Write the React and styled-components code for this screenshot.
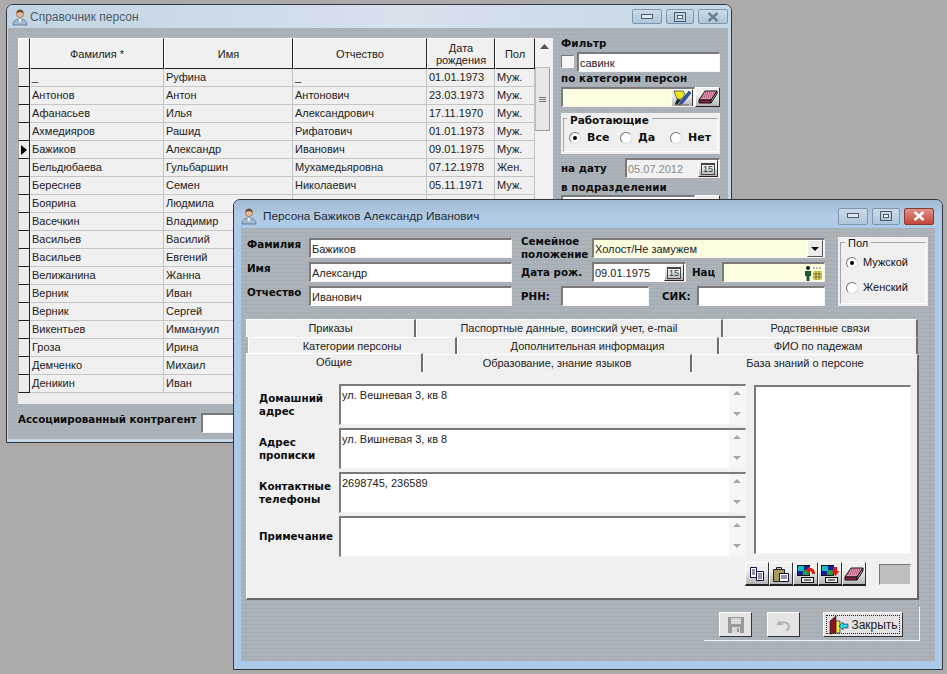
import React from 'react';
import styled, { createGlobalStyle, css } from 'styled-components';

const GlobalStyle = createGlobalStyle`
  html, body { margin: 0; padding: 0; background: #ababab; }
  body { font-family: "Liberation Sans", Arial, sans-serif; font-size: 11px; color: #111; }
  * { box-sizing: border-box; }
`;

const sunken = css`
  border-style: solid;
  border-width: 2px 1px 1px 2px;
  border-color: #7a7a7a #f4f4f4 #f4f4f4 #7a7a7a;
`;

const Desktop = styled.div`
  position: relative;
  width: 947px;
  height: 674px;
  overflow: hidden;
  background: #ababab;
`;

const Win = styled.div`
  position: absolute;
  left: ${p => p.$x}px;
  top: ${p => p.$y}px;
  width: ${p => p.$w}px;
  height: ${p => p.$h}px;
  display: flex;
  flex-direction: column;
  padding: ${p => p.$active ? '0 7px 8px' : '0 3px 3px 1px'};
  border: 1px solid #33373c;
  border-radius: 7px 7px 0 0;
  background: ${p => p.$active ? '#abc9e8' : '#c4d5e4'};
`;

const TitleBar = styled.div`
  flex: none;
  height: ${p => p.$active ? 28 : 23}px;
  margin: ${p => p.$active ? '0 -7px' : '0 -3px 0 -1px'};
  padding: ${p => p.$active ? '4px 8px 0 6px' : '0 3px 0 4px'};
  display: flex;
  align-items: center;
  gap: ${p => p.$active ? 5 : 1}px;
  border-radius: 6px 6px 0 0;
  font-size: ${p => p.$active ? 11.8 : 12}px;
  color: ${p => p.$active ? '#1e2a38' : '#4e5a66'};
  background: ${p => p.$active
    ? 'linear-gradient(180deg, #9fbad6 0%, #b4cbe3 60%, #abc9e8 100%)'
    : 'linear-gradient(90deg, #c2d4e4 0%, #d6e2ec 55%, #c6d7e6 100%)'};
`;

const TitleText = styled.span`
  flex: 1;
`;

const WinButtons = styled.div`
  display: flex;
  gap: 4px;
`;

const WinButton = styled.div`
  width: ${p => p.$wide ? 30 : 28}px;
  height: ${p => p.$active ? 17 : 15}px;
  display: flex;
  align-items: center;
  justify-content: center;
  border: 1px solid ${p => p.$close && p.$active ? '#8a3a30' : '#7f95ab'};
  border-radius: 2px;
  background: ${p => p.$close && p.$active
    ? 'linear-gradient(180deg, #e0908a, #c2483c)'
    : 'linear-gradient(180deg, #cbdbea, #aec5db)'};
`;

const Client = styled.div`
  flex: 1;
  min-height: 0;
  background-color: #aab2b8;
  background-image:
    repeating-linear-gradient(90deg, rgba(255,255,255,.05) 0 1px, transparent 1px 3px),
    repeating-linear-gradient(0deg, rgba(0,0,0,.035) 0 1px, transparent 1px 4px);
`;

const ListClient = styled(Client)`
  padding: 10px 0 0 10px;
`;

const ListTop = styled.div`
  display: flex;
  gap: 8px;
`;

const GridBox = styled.div`
  width: 535px;
  height: 366px;
  display: flex;
  background: #ececec;
  overflow: hidden;
`;

const Table = styled.div`
  flex: none;
  width: 517px;
  display: grid;
  grid-template-columns: 12px 134px 129px 134px 68px 40px;
  grid-template-rows: 31px;
  grid-auto-rows: 18px;
  align-content: start;
`;

const HeadCell = styled.div`
  display: flex;
  align-items: center;
  justify-content: center;
  text-align: center;
  font-size: 11px;
  line-height: 12px;
  color: #222;
  background: #f0f0f0;
  border-right: 1px solid #222;
  border-bottom: 1px solid #222;
  border-left: 1px solid #fff;
  border-top: 1px solid #fff;
`;

const Indicator = styled.div`
  display: flex;
  align-items: center;
  justify-content: center;
  background: #ececec;
  border-right: 1px solid #222;
  border-bottom: 1px solid #222;
  border-left: 1px solid #aaa;
`;

const Arrow = styled.div`
  width: 0;
  height: 0;
  border-left: 6px solid #000;
  border-top: 5px solid transparent;
  border-bottom: 5px solid transparent;
`;

const Cell = styled.div`
  padding: 1px 0 0 2px;
  font-size: 11px;
  line-height: 15px;
  color: #222;
  white-space: nowrap;
  overflow: hidden;
  background: #f0f0f0;
  border-right: 1px solid #c4c4c4;
  border-bottom: 1px solid #c4c4c4;
`;

const VScroll = styled.div`
  flex: none;
  width: 18px;
  display: flex;
  flex-direction: column;
  background: #f2f2f2;
`;

const ScrollBtn = styled.div`
  height: 18px;
  display: flex;
  align-items: center;
  justify-content: center;
`;

const Thumb = styled.div`
  width: 15px;
  height: 64px;
  margin: 11px 0 0 0;
  display: flex;
  flex-direction: column;
  align-items: center;
  justify-content: center;
  gap: 1px;
  background: #e6e6e6;
  border: 1px solid #bbb;
  border-right-color: #999;
  border-bottom-color: #999;
`;

const ThumbLine = styled.i`
  display: block;
  width: 7px;
  height: 1px;
  background: #777;
`;

const Side = styled.div`
  width: 159px;
`;

const Bold = styled.div`
  font-family: "DejaVu Sans", sans-serif;
  font-weight: 700;
  font-size: 10.3px;
  line-height: 13px;
  color: #0c0c0c;
  white-space: nowrap;
`;

const SideLabel = styled(Bold)`
  margin-top: ${p => p.$top || 0}px;
  letter-spacing: 0.1px;
`;

const Row = styled.div`
  display: flex;
  align-items: ${p => p.$align || 'center'};
  gap: ${p => p.$gap || 0}px;
  margin-top: ${p => p.$top || 0}px;
`;

const Check = styled.div`
  flex: none;
  width: 13px;
  height: 13px;
  margin-top: 3px;
  background: #f5f5f5;
  border: 1px solid;
  border-color: #7a7a7a #f4f4f4 #f4f4f4 #7a7a7a;
`;

const Input = styled.div`
  width: ${p => p.$w ? `${p.$w}px` : 'auto'};
  flex: ${p => p.$w ? 'none' : 1};
  height: 20px;
  padding: 0 1px;
  display: flex;
  align-items: center;
  font-size: 11px;
  color: ${p => p.$muted ? '#8a8a8a' : '#222'};
  white-space: nowrap;
  overflow: hidden;
  background: ${p => p.$yellow ? '#fdfde0' : p.$muted ? '#f1f1f1' : '#fff'};
  ${sunken}
`;

const InputText = styled.span`
  flex: 1;
`;

const IconButton = styled.div`
  flex: none;
  width: ${p => p.$w || 22}px;
  height: ${p => p.$h || 18}px;
  display: flex;
  align-items: center;
  justify-content: center;
  background: linear-gradient(180deg, #f0f0f0 35%, #b4b4b4);
  border-style: solid;
  border-width: 1px;
  border-color: #fff #333 #222 #fff;
`;

const Group = styled.div`
  position: relative;
  flex: none;
  width: ${p => p.$w}px;
  height: ${p => p.$h}px;
  margin-top: ${p => p.$top || 0}px;
  margin-left: ${p => p.$left || 0}px;
  padding-top: ${p => p.$pad || 0}px;
  background: #efefef;
  &::before {
    content: '';
    position: absolute;
    inset: 5px 2px 2px 2px;
    border: 1px solid #a4a4a4;
    border-right-color: #fff;
    border-bottom-color: #fff;
  }
`;

const GroupTitle = styled.div`
  position: relative;
  display: inline-block;
  margin-left: ${p => p.$plain ? 7 : 6}px;
  padding: 0 3px;
  background: #efefef;
  line-height: 12px;
  font-size: ${p => p.$plain ? '11px' : '10.5px'};
  font-weight: ${p => p.$plain ? 400 : 700};
  font-family: ${p => p.$plain ? '"Liberation Sans"' : '"DejaVu Sans"'}, sans-serif;
`;

const RadioRow = styled.div`
  position: relative;
  display: grid;
  grid-template-columns: 51px 50px auto;
  margin-top: 5px;
  padding-left: 8px;
`;

const RadioColumn = styled.div`
  position: relative;
  display: flex;
  flex-direction: column;
  gap: 12px;
  padding: 7px 0 0 8px;
`;

const RadioItem = styled.div`
  display: flex;
  align-items: center;
  gap: ${p => p.$plain ? 5 : 6}px;
  font-size: 11px;
  line-height: 13px;
  font-weight: ${p => p.$plain ? 400 : 700};
  font-family: ${p => p.$plain ? '"Liberation Sans"' : '"DejaVu Sans"'}, sans-serif;
`;

const RadioDot = styled.span`
  flex: none;
  width: 12px;
  height: 12px;
  display: flex;
  align-items: center;
  justify-content: center;
  border-radius: 50%;
  background: #fff;
  border: 1px solid;
  border-color: #777 #ddd #ddd #777;
  &::after {
    content: '';
    width: 4px;
    height: 4px;
    border-radius: 50%;
    background: ${p => p.$on ? '#000' : 'transparent'};
  }
`;

const CalText = styled.span`
  font-size: 9px;
  line-height: 9px;
  padding: 0 1px;
  color: #333;
  border: 1px solid #444;
  border-top-width: 2px;
`;

const ListFooter = styled.div`
  display: flex;
  align-items: flex-start;
  gap: 5px;
  padding: 9px 0 0 0;
`;

const PersonClient = styled(Client)`
  padding: 10px 0 0 5px;
  display: flex;
  flex-direction: column;
`;

const Head = styled.div`
  display: flex;
  align-items: flex-start;
  height: 81px;
`;

const Names = styled.div`
  width: 275px;
  display: flex;
  flex-direction: column;
  gap: 4px;
`;

const NameRow = styled.div`
  display: flex;
  align-items: flex-start;
`;

const NameLabel = styled(Bold)`
  width: 63px;
  padding: 0 0 0 1px;
`;

const Middle = styled.div`
  width: 304px;
  display: flex;
  flex-direction: column;
  gap: 4px;
`;

const MidLabel = styled(Bold)`
  width: ${p => p.$w}px;
  flex: none;
  padding-left: ${p => p.$pad || 0}px;
`;

const TwoLineLabel = styled(MidLabel)`
  margin: -3px 0;
`;

const SelectArrow = styled.div`
  flex: none;
  width: 16px;
  height: 17px;
  display: flex;
  align-items: center;
  justify-content: center;
  background: #ececec;
  border: 1px solid;
  border-color: #fff #555 #555 #fff;
  &::after {
    content: '';
    border-top: 4px solid #111;
    border-left: 4px solid transparent;
    border-right: 4px solid transparent;
  }
`;

const TabsBlock = styled.div`
  width: 673px;
`;

const TabRow = styled.div`
  display: flex;
  height: ${p => p.$h}px;
  padding-left: ${p => p.$inset || 0}px;
`;

const Tab = styled.div`
  width: ${p => p.$w}px;
  height: ${p => p.$active ? p.$h + 1 : p.$h}px;
  flex: none;
  display: flex;
  align-items: center;
  justify-content: center;
  padding-bottom: 1px;
  font-size: 11px;
  color: #222;
  background: #efefef;
  border-top: 1px solid #fff;
  border-left: 1px solid #fff;
  border-right: 2px solid #6e6e6e;
  position: ${p => p.$active ? 'relative' : 'static'};
  z-index: ${p => p.$active ? 1 : 'auto'};
  ${p => p.$active && css`padding-bottom: 2px; margin-top: -1px;`}
`;

const TabPanel = styled.div`
  height: 228px;
  padding: 12px 6px 0 12px;
  background: #f0f0f0;
  border-right: 2px solid #666;
  border-bottom: 2px solid #666;
  border-left: 1px solid #fff;
`;

const PanelBody = styled.div`
  display: flex;
  align-items: flex-start;
  gap: 8px;
`;

const Memos = styled.div`
  width: 488px;
  display: flex;
  flex-direction: column;
  gap: 3px;
`;

const MemoRow = styled.div`
  display: flex;
  align-items: center;
`;

const MemoLabel = styled(Bold)`
  width: 80px;
  flex: none;
`;

const Memo = styled.div`
  flex: 1;
  height: 41px;
  display: flex;
  background: #fff;
  ${sunken}
`;

const MemoText = styled.div`
  flex: 1;
  padding: 2px 1px 0;
  font-size: 11px;
  line-height: 14px;
  color: #222;
`;

const MemoScroll = styled.div`
  flex: none;
  width: 16px;
  display: flex;
  flex-direction: column;
  justify-content: space-between;
  align-items: center;
  padding: 5px 0 8px;
  background: #f6f6f6;
`;

const MemoArrow = styled.i`
  display: block;
  border-left: 4px solid transparent;
  border-right: 4px solid transparent;
  ${p => p.$down ? 'border-top: 4px solid #a6a6a6;' : 'border-bottom: 4px solid #a6a6a6;'}
`;

const BigBox = styled.div`
  width: 157px;
  height: 169px;
  margin-top: 1px;
  background: #fff;
  ${sunken}
`;

const ToolsRow = styled.div`
  display: flex;
  align-items: flex-start;
  justify-content: flex-end;
  gap: 13px;
  margin-top: 5px;
`;

const Tools = styled.div`
  display: flex;
`;

const ToolButton = styled(IconButton)`
  width: 24.2px;
  height: 24px;
  border-bottom-width: 2px;
`;

const Swatch = styled.div`
  width: 32px;
  height: 21px;
  margin-top: 2px;
  background: #bdbdbd;
  border: 1px solid;
  border-color: #777 #eee #eee #777;
`;

const ActionsRow = styled.div`
  align-self: flex-start;
  width: 216px;
  height: 34px;
  margin: 7px 0 0 458px;
  padding: 5px 0 0 15px;
  display: flex;
  align-items: flex-start;
  border-right: 1px solid #f4f4f4;
  border-bottom: 1px solid #f4f4f4;
`;

const FlatButton = styled.div`
  width: ${p => p.$w}px;
  height: 25px;
  margin-right: ${p => p.$gap}px;
  flex: none;
  display: flex;
  align-items: center;
  justify-content: center;
  font-size: 12px;
  color: #222;
  background: #e4e4e4;
  border: 1px solid;
  border-color: #fff #333 #333 #fff;
`;

const FocusBox = styled.div`
  flex: 1;
  align-self: stretch;
  margin: 2px;
  display: flex;
  align-items: center;
  justify-content: center;
  gap: 2px;
  border: 1px dotted #222;
`;

const PersonIcon = () => (
  <svg width="18" height="18" viewBox="0 0 18 18">
    <path d="M2 17c0-4 3-6 7-6s7 2 7 6z" fill="#9fb9d6" stroke="#53657a" strokeWidth=".7" />
    <path d="M7.500 11l1.500 4 1.500-4z" fill="#fff" />
    <circle cx="9" cy="6" r="3.600" fill="#e7b993" stroke="#7d5a3f" strokeWidth=".6" />
    <path d="M5.500 5.500C5.500 2.500 7 1.500 9 1.500s3.500 1 3.500 4C11 3.800 7 3.800 5.500 5.500z" fill="#6b4a2c" />
  </svg>
);

const Eraser = () => (
  <svg width="20" height="16" viewBox="0 0 20 16">
    <path d="M7 2h12l-6 9H1z" fill="#ec8fb4" stroke="#111" />
    <path d="M1 11h12v3H1z" fill="#8c1f45" stroke="#111" />
    <path d="M13 11l6-9v3l-6 9z" fill="#a8a8a8" stroke="#111" />
    <path d="M7 4h9M5.500 6h9.500M4 8h9" stroke="#6a2a4a" strokeWidth=".8" strokeDasharray="1 1" />
  </svg>
);

const PickIcon = () => (
  <svg width="18" height="18" viewBox="0 0 18 18">
    <path d="M1 2h9l2 3-3 5H4z" fill="#ece820" stroke="#333" strokeWidth=".7" />
    <path d="M4 10l4 1-4 5-2-1z" fill="#222" />
    <path d="M16 2L8 12l-2 4 4-2 8-10z" fill="#2b55c5" stroke="#10224f" strokeWidth=".6" />
    <path d="M2 16h14" stroke="#555" strokeWidth=".8" />
  </svg>
);

const CopyIcon = () => (
  <svg width="18" height="18" viewBox="0 0 18 18" fill="#fff" stroke="#10104a">
    <path d="M2.500 2.500h6v10h-6z" />
    <path d="M8.500 6.500h7v9h-7z" />
    <path d="M4 5h3M4 7h3M4 9h3M10 9h4M10 11h4M10 13h4" strokeWidth=".9" />
  </svg>
);

const PasteIcon = () => (
  <svg width="18" height="18" viewBox="0 0 18 18" stroke="#222">
    <path d="M1.500 4.500h11v12h-11z" fill="#a89c5c" />
    <path d="M4.500 4.500v-2h5v2z" fill="#c8c8c8" />
    <path d="M7.500 8.500h9v8h-9z" fill="#fff" stroke="#10104a" />
    <path d="M9 11h6M9 13h6" stroke="#10104a" strokeWidth=".9" />
  </svg>
);

const PicIcon = ({ down }) => (
  <svg width="20" height="20" viewBox="0 0 20 20">
    <rect x="1.500" y="1.500" width="12" height="10" fill="#1020a0" stroke="#111" />
    <rect x="2" y="2" width="6" height="5" fill="#12c0c0" />
    <rect x="7" y="6" width="6" height="5" fill="#20a040" />
    <rect x="5.500" y="13.500" width="12" height="5" fill="#e8e8e8" stroke="#111" />
    <path d="M8 16h7" stroke="#111" />
    <path d={down ? 'M13 3h4v4h2.500l-4 5-4-5H13z' : 'M10 6l4-4v2c3 0 5 2 5 6h-3c0-2-1-3-2-3v3z'} fill="#e01818" />
  </svg>
);

const SaveIcon = () => (
  <svg width="18" height="18" viewBox="0 0 18 18" fill="#9a9a9a">
    <path d="M1 1h16v16H1z" />
    <path d="M4 2h10v6H4z" fill="#d8d8d8" />
    <path d="M5 11h8v6H5z" fill="#d8d8d8" />
    <path d="M10 12h2v4h-2z" fill="#9a9a9a" />
  </svg>
);

const UndoIcon = () => (
  <svg width="16" height="14" viewBox="0 0 16 14" fill="none" stroke="#b4b4b4" strokeWidth="2">
    <path d="M4 3l-2 3h5" />
    <path d="M3 6c4-3 9-2 10 2 0 2-1 4-3 4" />
  </svg>
);

const DoorIcon = () => (
  <svg width="21" height="20" viewBox="0 0 21 20">
    <path d="M2 6l6-5v17l-6 1z" fill="#8a1520" stroke="#222" strokeWidth=".7" />
    <path d="M8 6h4v12H8z" fill="#f0e838" stroke="#222" strokeWidth=".7" />
    <path d="M11 11l4-4v2h5v4h-5v2z" fill="#30d0e8" stroke="#225" strokeWidth=".6" />
  </svg>
);

const NatIcon = () => (
  <svg width="20" height="16" viewBox="0 0 20 16">
    <circle cx="5" cy="3" r="2" fill="#111" />
    <path d="M2 6h6v5H6.500v5h-3v-5H2z" fill="#1a5a30" />
    <path d="M10 6h9v9h-9z" fill="#e8e040" />
    <path d="M11 2v2M14 2v2M17 2v2M10 9h9M10 12h9M13 6v9M16 6v9" stroke="#555" strokeWidth=".8" />
  </svg>
);

const ArrowUp = () => (
  <svg width="9" height="6" viewBox="0 0 9 6"><path d="M4.500 0L9 5H0z" fill="#555" /></svg>
);

const MinGlyph = () => (
  <svg width="12" height="6" viewBox="0 0 12 6"><rect x=".5" y=".5" width="11" height="4" fill="#dfe6ee" stroke="#4c5a6a" /></svg>
);

const MaxGlyph = () => (
  <svg width="12" height="10" viewBox="0 0 12 10"><rect x=".5" y=".5" width="11" height="9" fill="none" stroke="#4c5a6a" /><rect x="3.500" y="3.500" width="5" height="3" fill="#fff" stroke="#4c5a6a" /></svg>
);

const CloseGlyph = ({ light }) => (
  <svg width="12" height="10" viewBox="0 0 12 10">
    <path d="M1.500 1l9 8M10.500 1l-9 8" stroke={light ? '#fff' : '#6d7f92'} strokeWidth="2.400" />
  </svg>
);

const Calendar = () => <IconButton $w={20} $h={17}><CalText>15</CalText></IconButton>;

const Titlebar = ({ title, active }) => (
  <TitleBar $active={active}>
    <PersonIcon />
    <TitleText>{title}</TitleText>
    <WinButtons>
      <WinButton $active={active} $wide><MinGlyph /></WinButton>
      <WinButton $active={active}><MaxGlyph /></WinButton>
      <WinButton $active={active} $close $wide><CloseGlyph light={active} /></WinButton>
    </WinButtons>
  </TitleBar>
);

const people = [
  ['_', 'Руфина', '_', '01.01.1973', 'Муж.'],
  ['Антонов', 'Антон', 'Антонович', '23.03.1973', 'Муж.'],
  ['Афанасьев', 'Илья', 'Александрович', '17.11.1970', 'Муж.'],
  ['Ахмедияров', 'Рашид', 'Рифатович', '01.01.1973', 'Муж.'],
  ['Бажиков', 'Александр', 'Иванович', '09.01.1975', 'Муж.'],
  ['Бельдюбаева', 'Гульбаршин', 'Мухамедьяровна', '07.12.1978', 'Жен.'],
  ['Береснев', 'Семен', 'Николаевич', '05.11.1971', 'Муж.'],
  ['Боярина', 'Людмила'],
  ['Васечкин', 'Владимир'],
  ['Васильев', 'Василий'],
  ['Васильев', 'Евгений'],
  ['Велижанина', 'Жанна'],
  ['Верник', 'Иван'],
  ['Верник', 'Сергей'],
  ['Викентьев', 'Иммануил'],
  ['Гроза', 'Ирина'],
  ['Демченко', 'Михаил'],
  ['Деникин', 'Иван'],
];

const heads = ['Фамилия *', 'Имя', 'Отчество', <>Дата<br />рождения</>, 'Пол'];

const tabRows = [
  { h: 18, inset: 0, tabs: [['Приказы', 170], ['Паспортные данные, воинский учет, e-mail', 307], ['Родственные связи', 195]] },
  { h: 17, inset: 2, tabs: [['Категории персоны', 209], ['Дополнительная информация', 262], ['ФИО по падежам', 199]] },
  { h: 18, inset: 0, tabs: [['Общие', 177, true], ['Образование, знание языков', 269], ['База знаний о персоне', 227]] },
];

const memos = [
  [<>Домашний<br />адрес</>, 'ул. Вешневая 3, кв 8'],
  [<>Адрес<br />прописки</>, 'ул. Вишневая 3, кв 8'],
  [<>Контактные<br />телефоны</>, '2698745, 236589'],
  ['Примечание', ''],
];

function PersonList() {
  return (
    <Win $x={6} $y={4} $w={726} $h={439}>
      <Titlebar title="Справочник персон" />
      <ListClient>
        <ListTop>
          <GridBox>
            <Table>
              <HeadCell />
              {heads.map((h, i) => <HeadCell key={i}>{h}</HeadCell>)}
              {people.map((p, i) => (
                <React.Fragment key={i}>
                  <Indicator>{p[0] === 'Бажиков' && <Arrow />}</Indicator>
                  {[0, 1, 2, 3, 4].map(c => <Cell key={c}>{p[c] || ''}</Cell>)}
                </React.Fragment>
              ))}
            </Table>
            <VScroll>
              <ScrollBtn><ArrowUp /></ScrollBtn>
              <Thumb><ThumbLine /><ThumbLine /><ThumbLine /></Thumb>
            </VScroll>
          </GridBox>
          <Side>
            <SideLabel $top={-1}>Фильтр</SideLabel>
            <Row $gap={3} $top={2} $align="flex-start">
              <Check />
              <Input>савинк</Input>
            </Row>
            <SideLabel>по категории персон</SideLabel>
            <Row $top={2}>
              <Input $yellow>
                <InputText />
                <IconButton $w={22} $h={18}><PickIcon /></IconButton>
              </Input>
              <IconButton $w={25} $h={20}><Eraser /></IconButton>
            </Row>
            <Group $top={6} $w={159} $h={41} $pad={1}>
              <GroupTitle>Работающие</GroupTitle>
              <RadioRow>
                <RadioItem><RadioDot $on />Все</RadioItem>
                <RadioItem><RadioDot />Да</RadioItem>
                <RadioItem><RadioDot />Нет</RadioItem>
              </RadioRow>
            </Group>
            <Row $top={4}>
              <MidLabel $w={64}>на дату</MidLabel>
              <Input $muted $w={95}>
                <InputText>05.07.2012</InputText>
                <Calendar />
              </Input>
            </Row>
            <SideLabel $top={3}>в подразделении</SideLabel>
            <Row $top={1}>
              <Input />
              <IconButton $w={25} $h={20} />
            </Row>
          </Side>
        </ListTop>
        <ListFooter>
          <Bold>Ассоциированный контрагент</Bold>
          <Input $w={180} />
        </ListFooter>
      </ListClient>
    </Win>
  );
}

function PersonCard() {
  return (
    <Win $x={233} $y={199} $w={710} $h={471} $active>
      <Titlebar title="Персона Бажиков Александр Иванович" active />
      <PersonClient>
        <Head>
          <Names>
            <NameRow><NameLabel>Фамилия</NameLabel><Input $w={203}>Бажиков</Input></NameRow>
            <NameRow><NameLabel>Имя</NameLabel><Input $w={203}>Александр</Input></NameRow>
            <NameRow><NameLabel>Отчество</NameLabel><Input $w={203}>Иванович</Input></NameRow>
          </Names>
          <Middle>
            <Row>
              <TwoLineLabel $w={71}>Семейное<br />положение</TwoLineLabel>
              <Input $yellow>
                <InputText>Холост/Не замужем</InputText>
                <SelectArrow />
              </Input>
            </Row>
            <Row>
              <MidLabel $w={71}>Дата рож.</MidLabel>
              <Input $w={94}>
                <InputText>09.01.1975</InputText>
                <Calendar />
              </Input>
              <MidLabel $w={36} $pad={6}>Нац</MidLabel>
              <Input $yellow>
                <InputText />
                <NatIcon />
              </Input>
            </Row>
            <Row>
              <MidLabel $w={40}>РНН:</MidLabel>
              <Input $w={88} />
              <MidLabel $w={48} $pad={13}>СИК:</MidLabel>
              <Input />
            </Row>
          </Middle>
          <Group $w={90} $h={69} $top={-1} $left={13}>
            <GroupTitle $plain>Пол</GroupTitle>
            <RadioColumn>
              <RadioItem $plain><RadioDot $on />Мужской</RadioItem>
              <RadioItem $plain><RadioDot />Женский</RadioItem>
            </RadioColumn>
          </Group>
        </Head>
        <TabsBlock>
          {tabRows.map((r, i) => (
            <TabRow key={i} $h={r.h} $inset={r.inset}>
              {r.tabs.map(([label, w, active]) => (
                <Tab key={label} $w={w} $h={r.h} $active={active}>{label}</Tab>
              ))}
            </TabRow>
          ))}
          <TabPanel>
            <PanelBody>
              <Memos>
                {memos.map(([label, value], i) => (
                  <MemoRow key={i}>
                    <MemoLabel>{label}</MemoLabel>
                    <Memo>
                      <MemoText>{value}</MemoText>
                      <MemoScroll><MemoArrow /><MemoArrow $down /></MemoScroll>
                    </Memo>
                  </MemoRow>
                ))}
              </Memos>
              <BigBox />
            </PanelBody>
            <ToolsRow>
              <Tools>
                <ToolButton><CopyIcon /></ToolButton>
                <ToolButton><PasteIcon /></ToolButton>
                <ToolButton><PicIcon /></ToolButton>
                <ToolButton><PicIcon down /></ToolButton>
                <ToolButton><Eraser /></ToolButton>
              </Tools>
              <Swatch />
            </ToolsRow>
          </TabPanel>
        </TabsBlock>
        <ActionsRow>
          <FlatButton $w={33} $gap={15}><SaveIcon /></FlatButton>
          <FlatButton $w={33} $gap={23}><UndoIcon /></FlatButton>
          <FlatButton $w={80} $gap={0}>
            <FocusBox><DoorIcon />Закрыть</FocusBox>
          </FlatButton>
        </ActionsRow>
      </PersonClient>
    </Win>
  );
}

export default function App() {
  return (
    <Desktop>
      <GlobalStyle />
      <PersonList />
      <PersonCard />
    </Desktop>
  );
}
